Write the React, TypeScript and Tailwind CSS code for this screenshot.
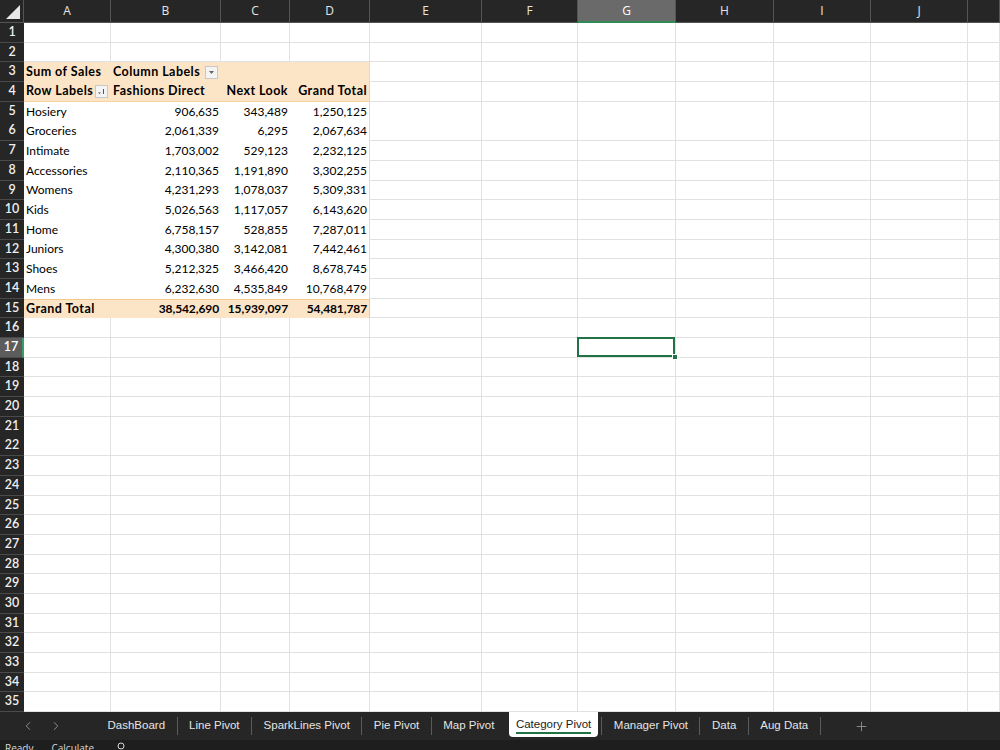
import { ChevronLeft, ChevronRight, Plus } from 'lucide-react'

const COLS = ['A', 'B', 'C', 'D', 'E', 'F', 'G', 'H', 'I', 'J', '']
const GRID =
  'grid shrink-0 grid-cols-[24px_87px_110px_69px_80px_112px_96px_98px_98px_97px_97px_32px]'

const PIVOT: [string, string, string, string][] = [
  ['Hosiery', '906,635', '343,489', '1,250,125'],
  ['Groceries', '2,061,339', '6,295', '2,067,634'],
  ['Intimate', '1,703,002', '529,123', '2,232,125'],
  ['Accessories', '2,110,365', '1,191,890', '3,302,255'],
  ['Womens', '4,231,293', '1,078,037', '5,309,331'],
  ['Kids', '5,026,563', '1,117,057', '6,143,620'],
  ['Home', '6,758,157', '528,855', '7,287,011'],
  ['Juniors', '4,300,380', '3,142,081', '7,442,461'],
  ['Shoes', '5,212,325', '3,466,420', '8,678,745'],
  ['Mens', '6,232,630', '4,535,849', '10,768,479'],
]

const TABS = [
  'DashBoard',
  'Line Pivot',
  'SparkLines Pivot',
  'Pie Pivot',
  'Map Pivot',
  'Category Pivot',
  'Manager Pivot',
  'Data',
  'Aug Data',
]

const ACTIVE_ROW = 17
const ACTIVE_COL = 6 // G

function FilterButton({ sorted }: { sorted?: boolean }) {
  return (
    <span className="ml-auto mr-[1px] flex h-[13px] w-[13px] shrink-0 items-center justify-center border border-[#c8c8c8] bg-[#f4f4f4]">
      {sorted ? (
        <svg width="9" height="9" viewBox="0 0 9 9">
          <path d="M1 5.5h3L2.5 7z" fill="#555" />
          <path d="M6.5 2v5" stroke="#555" strokeWidth="1" />
        </svg>
      ) : (
        <svg width="7" height="5" viewBox="0 0 7 5">
          <path d="M1 1h5L3.5 4z" fill="#666" />
        </svg>
      )}
    </span>
  )
}

const LABEL = 'font-bold text-[12.5px] tracking-[0.45px]'
const TOTAL = 'font-bold text-[12px] tracking-[-0.1px]'

function pivotCell(row: number, col: number) {
  // A3:D15 holds the pivot table, so no gridlines inside it
  if (row === 3) {
    if (col === 0) return { cls: `bg-[#fce4c6] ${LABEL}`, text: 'Sum of Sales' }
    if (col === 1)
      return {
        cls: `bg-[#fce4c6] ${LABEL}`,
        text: 'Column Labels',
        extra: <FilterButton />,
      }
    return { cls: 'bg-[#fce4c6]', text: '' }
  }
  if (row === 4) {
    const heads = ['Row Labels', 'Fashions Direct', 'Next Look', 'Grand Total']
    return {
      cls: `bg-[#fce4c6] ${LABEL} border-b border-[#f7d3a3]`,
      text: heads[col],
      right: col > 1,
      extra: col === 0 ? <FilterButton sorted /> : undefined,
    }
  }
  if (row === 15) {
    const total = ['Grand Total', '38,542,690', '15,939,097', '54,481,787']
    return {
      cls: `bg-[#fce4c6] ${col === 0 ? LABEL : TOTAL} border-t border-[#f2c98f]`,
      text: total[col],
      right: col > 0,
    }
  }
  const line = PIVOT[row - 5]
  return { cls: 'bg-white text-[12px]', text: line[col], right: col > 0 }
}

function SheetRow({ row }: { row: number }) {
  const isActive = row === ACTIVE_ROW
  return (
    <div className={`${GRID} h-[19.7px]`}>
      <div
        className={`flex items-center justify-center border-b border-[#4a4a4a] text-[12.5px] font-semibold ${
          isActive
            ? 'border-r-2 border-r-[#3a9b63] bg-[#5c5c5c] text-white'
            : 'bg-[#262626] text-[#f0f0f0]'
        }`}
      >
        {row}
      </div>
      {COLS.map((_, col) => {
        const inPivot = row >= 3 && row <= 15 && col <= 3
        if (inPivot) {
          const cell = pivotCell(row, col)
          return (
            <div
              key={col}
              className={`flex items-center overflow-visible whitespace-nowrap px-[2px] text-black ${
                cell.cls
              } ${cell.right ? 'justify-end' : ''} ${col === 3 ? 'border-r border-[#dcdcdc]' : ''}`}
            >
              <span>{cell.text}</span>
              {cell.extra}
            </div>
          )
        }
        const selected = isActive && col === ACTIVE_COL
        return (
          <div
            key={col}
            className="relative border-b border-r border-[#e1e1e1] bg-white"
          >
            {selected && (
              <>
                <div className="absolute -left-px -top-px bottom-0 right-0 z-10 border-2 border-[#217346]" />
                <div className="absolute -bottom-[3px] -right-[3px] z-20 h-[6px] w-[6px] border border-white bg-[#217346]" />
              </>
            )}
          </div>
        )
      })}
    </div>
  )
}

export default function App() {
  const rows = Array.from({ length: 35 }, (_, i) => i + 1)

  return (
    <div className="flex h-[750px] w-[1000px] flex-col overflow-hidden bg-white font-['Lato','Open_Sans',sans-serif]">
      {/* column letters */}
      <div className={`${GRID} h-[23px] bg-[#262626] font-['Open_Sans',sans-serif] text-[12px] text-[#e6e6e6]`}>
        <div className="relative border-b border-r border-[#555]">
          <svg className="absolute bottom-[3px] right-[3px]" width="14" height="14" viewBox="0 0 14 14">
            <path d="M14 0V14H0z" fill="#e8e8e8" />
          </svg>
        </div>
        {COLS.map((c, i) => (
          <div
            key={i}
            className={`flex items-center justify-center border-r border-[#555] ${
              i === ACTIVE_COL
                ? 'border-b-2 border-b-[#2f8c57] bg-[#6a6a6a] text-white'
                : 'border-b border-b-[#555]'
            }`}
          >
            {c}
          </div>
        ))}
      </div>

      {rows.map((r) => (
        <SheetRow key={r} row={r} />
      ))}

      {/* sheet tabs */}
      <div className="flex h-[28px] shrink-0 items-center bg-[#262626] font-['Liberation_Sans',sans-serif] text-[11.5px] text-[#e4e4e4]">
        <div className="flex w-[96px] items-center gap-[14px] pl-[21px] text-[#9a9a9a]">
          <ChevronLeft className="h-[14px] w-[14px]" strokeWidth={1.5} />
          <ChevronRight className="h-[14px] w-[14px]" strokeWidth={1.5} />
        </div>
        {TABS.map((t, i) => {
          const active = t === 'Category Pivot'
          const nextActive = TABS[i + 1] === 'Category Pivot'
          return (
            <div key={t} className="flex h-full items-center">
              {active ? (
                <div className="mx-[3px] mb-[3px] flex h-[25px] items-center self-start rounded-b-[4px] bg-white px-[7px] text-[#1c1c1c]">
                  <span className="border-b-2 border-[#217346] leading-[16px]">{t}</span>
                </div>
              ) : (
                <span className="px-[11.5px]">{t}</span>
              )}
              {!nextActive && <span className="h-[18px] w-px bg-[#5a5a5a]" />}
            </div>
          )
        })}
        <Plus className="ml-[33px] h-[15px] w-[15px] text-[#9a9a9a]" strokeWidth={1.3} />
      </div>

      {/* status bar */}
      <div className="flex h-[22px] shrink-0 items-start gap-[18px] bg-[#1e1e1e] pl-[5px] pt-[1px] font-['Open_Sans',sans-serif] text-[10px] leading-[14px] text-[#d8d8d8]">
        <span>Ready</span>
        <span>Calculate</span>
        <svg width="14" height="14" viewBox="0 0 14 14" className="ml-[2px]" fill="none" stroke="#d8d8d8" strokeWidth="1">
          <circle cx="7" cy="5" r="3" />
          <path d="M2 12h10M4 9l-1 3M10 9l1 3" />
        </svg>
      </div>
    </div>
  )
}
